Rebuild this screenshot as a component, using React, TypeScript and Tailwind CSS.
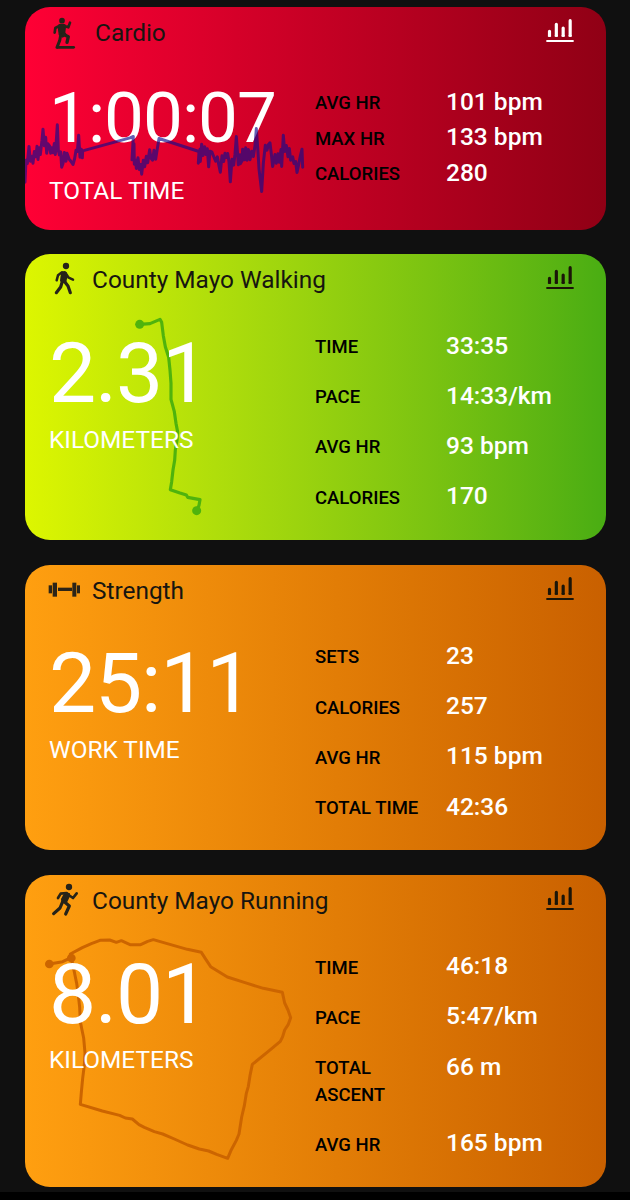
import type { ReactNode } from "react";

type Stat = { label: string; value: string };

type CardProps = {
  title: string;
  icon: ReactNode;
  total: string;
  unit: string;
  stats: Stat[];
  shape: string;
  chartColor?: string;
  compact?: boolean;
  behind?: ReactNode;
  above?: ReactNode;
};

function Figure({ children }: { children: ReactNode }) {
  return (
    <svg
      className="h-[35px] w-8 shrink-0"
      viewBox="24 18 96 105"
      fill="none"
      stroke="#262319"
      strokeLinecap="round"
      strokeLinejoin="round"
    >
      {children}
    </svg>
  );
}

function CardioIcon() {
  return (
    <Figure>
      <circle cx="66" cy="38" r="8.500" fill="#262319" stroke="none" />
      <path d="M58 50 H72 Q77 51 76 57 L74 74 L78 80 L68 87 L58 80 Q56 66 55 56 Z" fill="#262319" strokeWidth="4" />
      <path d="M59 53 L46 60 L44 74 M73 54 L85 58 L90 44" strokeWidth="8" />
      <path d="M70 79 L85 86 L81 103" strokeWidth="10" />
      <path d="M62 82 L59 98 L51 118" strokeWidth="9" />
      <path d="M55 118 H101" strokeWidth="8" />
    </Figure>
  );
}

function WalkIcon() {
  return (
    <Figure>
      <circle cx="78" cy="33" r="9.500" fill="#262319" stroke="none" />
      <path d="M68 52 Q74 49 78 54 L79 66 L76 80 L67 82 L63 76 L65 62 Z" fill="#262319" strokeWidth="6" />
      <path d="M66 52 L54 61 L50 76 M77 55 L86 68 L99 74" strokeWidth="7.500" />
      <path d="M67 79 L62 96 L49 113 M73 79 L84 93 L91 113" strokeWidth="9.500" />
    </Figure>
  );
}

function RunIcon() {
  return (
    <Figure>
      <circle cx="87" cy="33" r="9.500" fill="#262319" stroke="none" />
      <path d="M76 51 L87 54 L87 60 L79 77 L67 75 L66 70 Z" fill="#262319" strokeWidth="6" />
      <path d="M80 51 L62 53 L54 66 M86 57 L99 66 L110 52" strokeWidth="8" />
      <path d="M68 77 L60 96 L41 113 M74 78 L88 90 L77 114" strokeWidth="9.500" />
    </Figure>
  );
}

function DumbbellIcon() {
  return (
    <svg className="h-[35px] w-8 shrink-0" viewBox="24 6 96 105" fill="#2c2417">
      <rect x="26" y="46" width="10" height="24" />
      <rect x="38" y="38" width="13" height="42" />
      <rect x="54" y="53" width="42" height="10" />
      <rect x="97" y="38" width="12" height="42" />
      <rect x="111" y="46" width="9" height="24" />
    </svg>
  );
}

function ChartIcon({ color }: { color: string }) {
  return (
    <svg className="mt-[12px] h-6 w-7 shrink-0" viewBox="51 51 84 72" fill="none" stroke={color}>
      <path d="M61.5 88 V100 M82 67 V100 M102.500 78 V100 M123.500 56 V100" strokeWidth="9.500" strokeLinecap="round" />
      <path d="M56.750 99 V104 H66.250 V99 M77.250 99 V104 H86.750 V99 M97.750 99 V104 H107.250 V99 M118.750 99 V104 H128.250 V99" fill={color} stroke="none" />
      <path d="M52 117 H134" strokeWidth="6" />
    </svg>
  );
}

function HeartRateLine() {
  return (
    <svg
      className="pointer-events-none absolute top-0 left-0 h-[220px] w-[290px]"
      viewBox="15 20.5 870 660"
      fill="none"
      stroke="#120a8c"
      strokeOpacity="0.66"
      strokeWidth="9"
      strokeLinejoin="round"
      strokeLinecap="round"
    >
      <path d="M15 546 L18 480 L22 490 L27 439 L31 483 L36 468 L39 489 L43 454 L48 470 L51 438 L54 478 L58 443 L61 463 L66 420 L69 387 L73 437 L77 411 L80 459 L84 431 L89 438 L92 459 L95 443 L99 458 L103 430 L106 463 L109 420 L112 374 L115 451 L118 464 L122 455 L125 501 L129 490 L133 457 L138 483 L141 459 L147 476 L153 484 L159 493 L164 475 L168 450 L172 454 L176 405 L180 471 L184 447 L187 473 L188 452 L330 413 L340 409 L336 479 L342 431 L343 492 L347 480 L349 505 L354 473 L358 508 L362 493 L365 522 L370 480 L374 500 L379 468 L383 488 L389 449 L393 474 L398 480 L402 450 L407 477 L411 451 L417 415 L537 454 L535 489 L540 447 L541 484 L545 432 L549 466 L554 440 L558 463 L562 446 L566 500 L570 453 L576 456 L581 469 L587 483 L592 470 L596 492 L601 516 L606 467 L611 484 L615 459 L619 472 L623 460 L627 485 L631 545 L636 477 L641 495 L645 462 L649 409 L653 465 L655 494 L660 464 L661 491 L666 482 L668 447 L673 479 L677 443 L681 480 L685 448 L690 479 L695 453 L700 469 L705 437 L709 385 L714 456 L717 506 L725 574 L730 489 L736 435 L741 450 L745 434 L750 428 L755 470 L758 499 L765 463 L769 489 L774 461 L778 486 L783 448 L785 499 L790 405 L794 454 L799 436 L804 470 L808 445 L812 480 L818 470 L822 490 L827 484 L831 517 L837 488 L841 468 L846 447 L848 501" />
    </svg>
  );
}

function WalkRoute() {
  return (
    <svg
      className="pointer-events-none absolute top-0 left-0 h-[280px] w-[290px]"
      viewBox="15 12 870 840"
      fill="none"
      stroke="#4fb30d"
      strokeWidth="9.5"
      strokeLinejoin="round"
      strokeLinecap="round"
    >
      <path d="M359 223 L390 221 L420 208 L425 217 L430 257 L436 290 L446 322 L450 360 L453 400 L453 448 L463 485 L468 520 L473 546 L471 570 L466 600 L464 631 L459 660 L455 695 L451 719 L480 729 L499 735 L503 742 L540 749 L537 766 L530 782" />
      <circle cx="359" cy="223" r="13.500" fill="#4fb30d" stroke="none" />
      <circle cx="530" cy="782" r="13.500" fill="#4fb30d" stroke="none" />
    </svg>
  );
}

function RunRoute() {
  return (
    <svg
      className="pointer-events-none absolute top-0 left-0 h-[300px] w-[290px]"
      viewBox="15 15 870 900"
      fill="none"
      stroke="#cc6500"
      strokeWidth="9"
      strokeLinejoin="round"
    >
      <path d="M88 282 L128 275 L153 263 L151 252 L187 233 L214 221 L240 211 L269 210 L289 217 L304 212 L330 224 L362 224 L383 214 L400 209 L460 226 L502 238 L544 247 L558 269 L572 290 L622 321 L675 338 L730 355 L787 367 L794 399 L804 420 L812 443 L805 463 L794 480 L788 500 L781 514 L745 544 L697 583 L690 617 L685 649 L679 670 L673 707 L665 741 L657 792 L649 811 L634 839 L623 865 L590 853 L566 843 L538 837 L503 825 L463 807 L428 792 L403 785 L373 772 L357 764 L337 747 L316 744 L299 736 L247 723 L181 703 L184 667 L188 625 L193 585 L195 549 L191 504 L186 480 L181 455 L179 412 L175 375 L170 340 L163 306 L154 265" />
      <circle cx="88" cy="282" r="13" fill="#cc6500" stroke="none" />
      <circle cx="154" cy="264" r="13" fill="#cc6500" stroke="none" />
    </svg>
  );
}

function ActivityCard({
  title,
  icon,
  total,
  unit,
  stats,
  shape,
  chartColor = "#1b1508",
  compact = false,
  behind,
  above,
}: CardProps) {
  return (
    <section className={`relative w-[581px] overflow-hidden rounded-[25px] ${shape}`}>
      {behind}
      <div className="relative">
        <header className="flex h-[50.400px] items-start pr-[31.700px] pl-[23.500px]">
          <div className="pt-[7px]">{icon}</div>
          <h2
            className={`flex-1 pt-[10.200px] text-[24.400px] leading-8 font-normal text-[#171510] ${
              compact ? "pl-[15px]" : "pl-3"
            }`}
          >
            {title}
          </h2>
          <ChartIcon color={chartColor} />
        </header>
        <div className="flex pl-[24.500px] text-white">
          <div className={`w-[266px] shrink-0 ${compact ? "pt-[25.500px]" : "pt-[27.500px]"}`}>
            <p
              className={
                compact
                  ? "text-[71px] leading-[71px] tracking-[-1px]"
                  : "text-[84px] leading-[84px] tracking-[-1.200px]"
              }
            >
              {total}
            </p>
            <p className={`text-[24.400px] leading-8 ${compact ? "pt-[22px]" : "pt-[7.500px]"}`}>{unit}</p>
          </div>
          <dl className={`flex flex-1 flex-col ${compact ? "gap-[3.500px] pt-[29px]" : "gap-[18.200px] pt-[25px]"}`}>
            {stats.map((stat) => (
              <div key={stat.label} className="flex">
                <dt className="w-[131px] shrink-0 pt-[4.500px] pr-5 text-[18.500px] leading-[27px] font-medium text-black">
                  {stat.label}
                </dt>
                <dd className="text-[24.500px] leading-8 font-medium whitespace-nowrap">{stat.value}</dd>
              </div>
            ))}
          </dl>
        </div>
      </div>
      {above}
    </section>
  );
}

export default function App() {
  return (
    <main className="h-[1200px] w-[630px] overflow-hidden bg-black font-['Roboto',sans-serif]">
      <div className="flex h-[1192px] flex-col gap-[24.500px] bg-[#101010] pt-[6.500px] pl-[24.500px]">
        <ActivityCard
          compact
          title="Cardio"
          icon={<CardioIcon />}
          total="1:00:07"
          unit="TOTAL TIME"
          shape="h-[223.200px] bg-linear-to-r from-[#ff0035] to-[#900015]"
          chartColor="#ffffff"
          above={<HeartRateLine />}
          stats={[
            { label: "AVG HR", value: "101 bpm" },
            { label: "MAX HR", value: "133 bpm" },
            { label: "CALORIES", value: "280" },
          ]}
        />
        <ActivityCard
          title="County Mayo Walking"
          icon={<WalkIcon />}
          total="2.31"
          unit="KILOMETERS"
          shape="h-[285.900px] bg-linear-to-r from-[#ddf600] to-[#49ad13]"
          behind={<WalkRoute />}
          stats={[
            { label: "TIME", value: "33:35" },
            { label: "PACE", value: "14:33/km" },
            { label: "AVG HR", value: "93 bpm" },
            { label: "CALORIES", value: "170" },
          ]}
        />
        <ActivityCard
          title="Strength"
          icon={<DumbbellIcon />}
          total="25:11"
          unit="WORK TIME"
          shape="h-[285.800px] bg-linear-to-r from-[#ff9f10] to-[#c96000]"
          stats={[
            { label: "SETS", value: "23" },
            { label: "CALORIES", value: "257" },
            { label: "AVG HR", value: "115 bpm" },
            { label: "TOTAL TIME", value: "42:36" },
          ]}
        />
        <ActivityCard
          title="County Mayo Running"
          icon={<RunIcon />}
          total="8.01"
          unit="KILOMETERS"
          shape="h-[312.500px] bg-linear-to-r from-[#ff9f10] to-[#c96000]"
          behind={<RunRoute />}
          stats={[
            { label: "TIME", value: "46:18" },
            { label: "PACE", value: "5:47/km" },
            { label: "TOTAL ASCENT", value: "66 m" },
            { label: "AVG HR", value: "165 bpm" },
          ]}
        />
      </div>
    </main>
  );
}
